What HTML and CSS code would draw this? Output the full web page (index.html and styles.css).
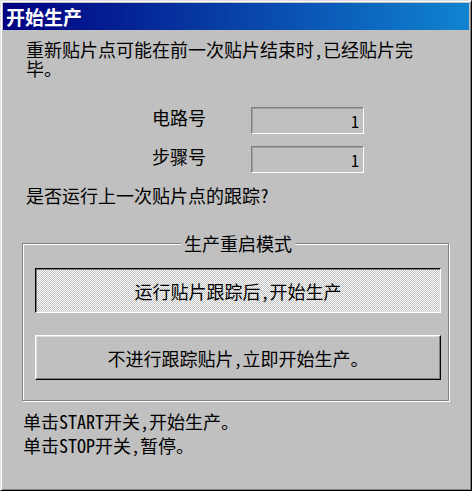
FILE: index.html
```html
<!DOCTYPE html>
<html lang="zh-CN">
<head>
  <meta charset="UTF-8">
  <meta name="viewport" content="width=device-width, initial-scale=1.0">
  <title>开始生产</title>
  <link rel="stylesheet" href="styles.css">
</head>
<body>
  <div class="window">
    <div class="titlebar">开始生产</div>
    <div class="content">
      <p class="message">重新贴片点可能在前一次贴片结束时,已经贴片完毕。</p>

      <div class="field">
        <label for="circuitNo">电路号</label>
        <input type="text" id="circuitNo" value="1" readonly>
      </div>
      <div class="field">
        <label for="stepNo">步骤号</label>
        <input type="text" id="stepNo" value="1" readonly>
      </div>

      <p class="question">是否运行上一次贴片点的跟踪?</p>

      <div class="group">
        <div class="legend">生产重启模式</div>
        <button class="btn pressed">运行贴片跟踪后,开始生产</button>
        <button class="btn">不进行跟踪贴片,立即开始生产。</button>
      </div>

      <div class="hint">
        <div>单击START开关,开始生产。</div>
        <div>单击STOP开关,暂停。</div>
      </div>
    </div>
  </div>
</body>
</html>
```

FILE: styles.css
```css
body {
  margin: 0;
  background-color: #c0c0c0;
  font-family: "Noto Sans Mono CJK SC", "Noto Sans CJK SC", sans-serif;
  font-size: 18px;
  color: #000;
}

.window {
  box-sizing: border-box;
  width: 472px;
  height: 491px;
  padding: 2px;
  background-color: #c0c0c0;
  border: 1px solid;
  border-color: #dfdfdf #000 #000 #dfdfdf;
  box-shadow: inset 1px 1px #fff, inset -1px -1px #808080;
}

.titlebar {
  height: 27px;
  line-height: 27px;
  padding-left: 3px;
  background: linear-gradient(to right, #000080, #1084d0);
  color: #fff;
  font-size: 19px;
  font-weight: bold;
}

.content {
  padding: 10px 0 0 19px;
}

.message {
  margin: 0 0 0 4px;
  width: 392px;
  line-height: 19px;
}

.field {
  display: flex;
  align-items: flex-start;
  gap: 45px;
  margin-top: 12px;
  padding-left: 130px;
  line-height: 20px;
}

.field:first-of-type {
  margin-top: 29px;
}

.field label {
  width: 54px;
}

.field input {
  box-sizing: border-box;
  width: 113px;
  height: 27px;
  margin: 0;
  padding: 0 4px 0 0;
  background-color: #c0c0c0;
  border: 1px solid;
  border-color: #808080 #fff #fff #808080;
  box-shadow: inset 1px 1px #a0a0a0;
  font-family: inherit;
  font-size: 16px;
  text-align: right;
  color: #000;
  outline: none;
}

.question {
  margin: 12px 0 0 4px;
  line-height: 20px;
}

.group {
  box-sizing: border-box;
  width: 427px;
  margin-top: 38px;
  padding: 0 7px 20px 12px;
  border: 1px solid #808080;
  box-shadow: inset 1px 1px #fff, 1px 1px #fff;
}

.legend {
  width: fit-content;
  margin: -11px auto 0;
  padding: 0 3px;
  line-height: 20px;
  background-color: #c0c0c0;
}

.btn {
  display: flex;
  align-items: center;
  justify-content: center;
  box-sizing: border-box;
  width: 406px;
  height: 45px;
  margin-top: 22px;
  padding: 0;
  background-color: #c0c0c0;
  border: 1px solid;
  border-color: #fff #000 #000 #fff;
  box-shadow: inset -1px -1px #808080, inset 1px 1px #dfdfdf;
  font-family: inherit;
  font-size: 18px;
  color: #000;
}

.btn.pressed {
  margin-top: 15px;
  border-color: #000 #fff #fff #000;
  box-shadow: inset 1px 1px #808080, inset -1px -1px #dfdfdf;
  background: repeating-conic-gradient(#fff 0 25%, #c0c0c0 0 50%) 0 0 / 2px 2px;
}

.hint {
  margin: 8px 0 0 1px;
  line-height: 24px;
}
```
